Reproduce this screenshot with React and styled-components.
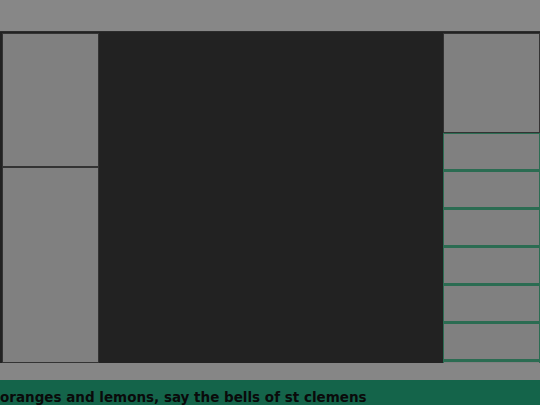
import React from 'react';
import styled, { createGlobalStyle } from 'styled-components';

const GlobalStyle = createGlobalStyle`
  html, body {
    margin: 0;
    padding: 0;
    background: #808080;
    overflow: hidden;
  }
  * {
    box-sizing: border-box;
  }
`;

const Page = styled.div`
  display: flex;
  flex-direction: column;
  width: 540px;
`;

const TopBar = styled.div`
  height: 31px;
  background: #878787;
`;

const Stage = styled.div`
  display: flex;
  justify-content: space-between;
  height: 332px;
  background: #222;
  border-top: 1px solid #2c2c2c;
  padding: 1px 0 0 2px;
`;

const Column = styled.div`
  display: flex;
  flex-direction: column;
  width: ${(p) => p.width}px;
  overflow: hidden;
`;

const Panel = styled.div`
  height: ${(p) => p.height}px;
  flex-shrink: 0;
  background: #808080;
  border: 1px solid #333;
`;

const Item = styled.div`
  height: 38px;
  flex-shrink: 0;
  background: #808080;
  border: 1px solid #2b6c52;
  border-bottom: 2px solid #2b6c52;
`;

const Gap = styled.div`
  height: 17px;
  background: #868686;
`;

const Footer = styled.div`
  height: 40px;
  background: #14644a;
  padding-top: 9px;
  font-family: 'DejaVu Sans', 'Verdana', sans-serif;
  font-weight: bold;
  font-size: 13.5px;
  color: #0a0a0a;
  white-space: nowrap;
`;

export default function App() {
  const items = [0, 1, 2, 3, 4, 5, 6];
  return (
    <Page>
      <GlobalStyle />
      <TopBar />
      <Stage>
        <Column width={97}>
          <Panel height={134} />
          <Panel height={196} />
        </Column>
        <Column width={97}>
          <Panel height={100} />
          {items.map((i) => (
            <Item key={i} />
          ))}
        </Column>
      </Stage>
      <Gap />
      <Footer>oranges and lemons, say the bells of st clemens</Footer>
    </Page>
  );
}
